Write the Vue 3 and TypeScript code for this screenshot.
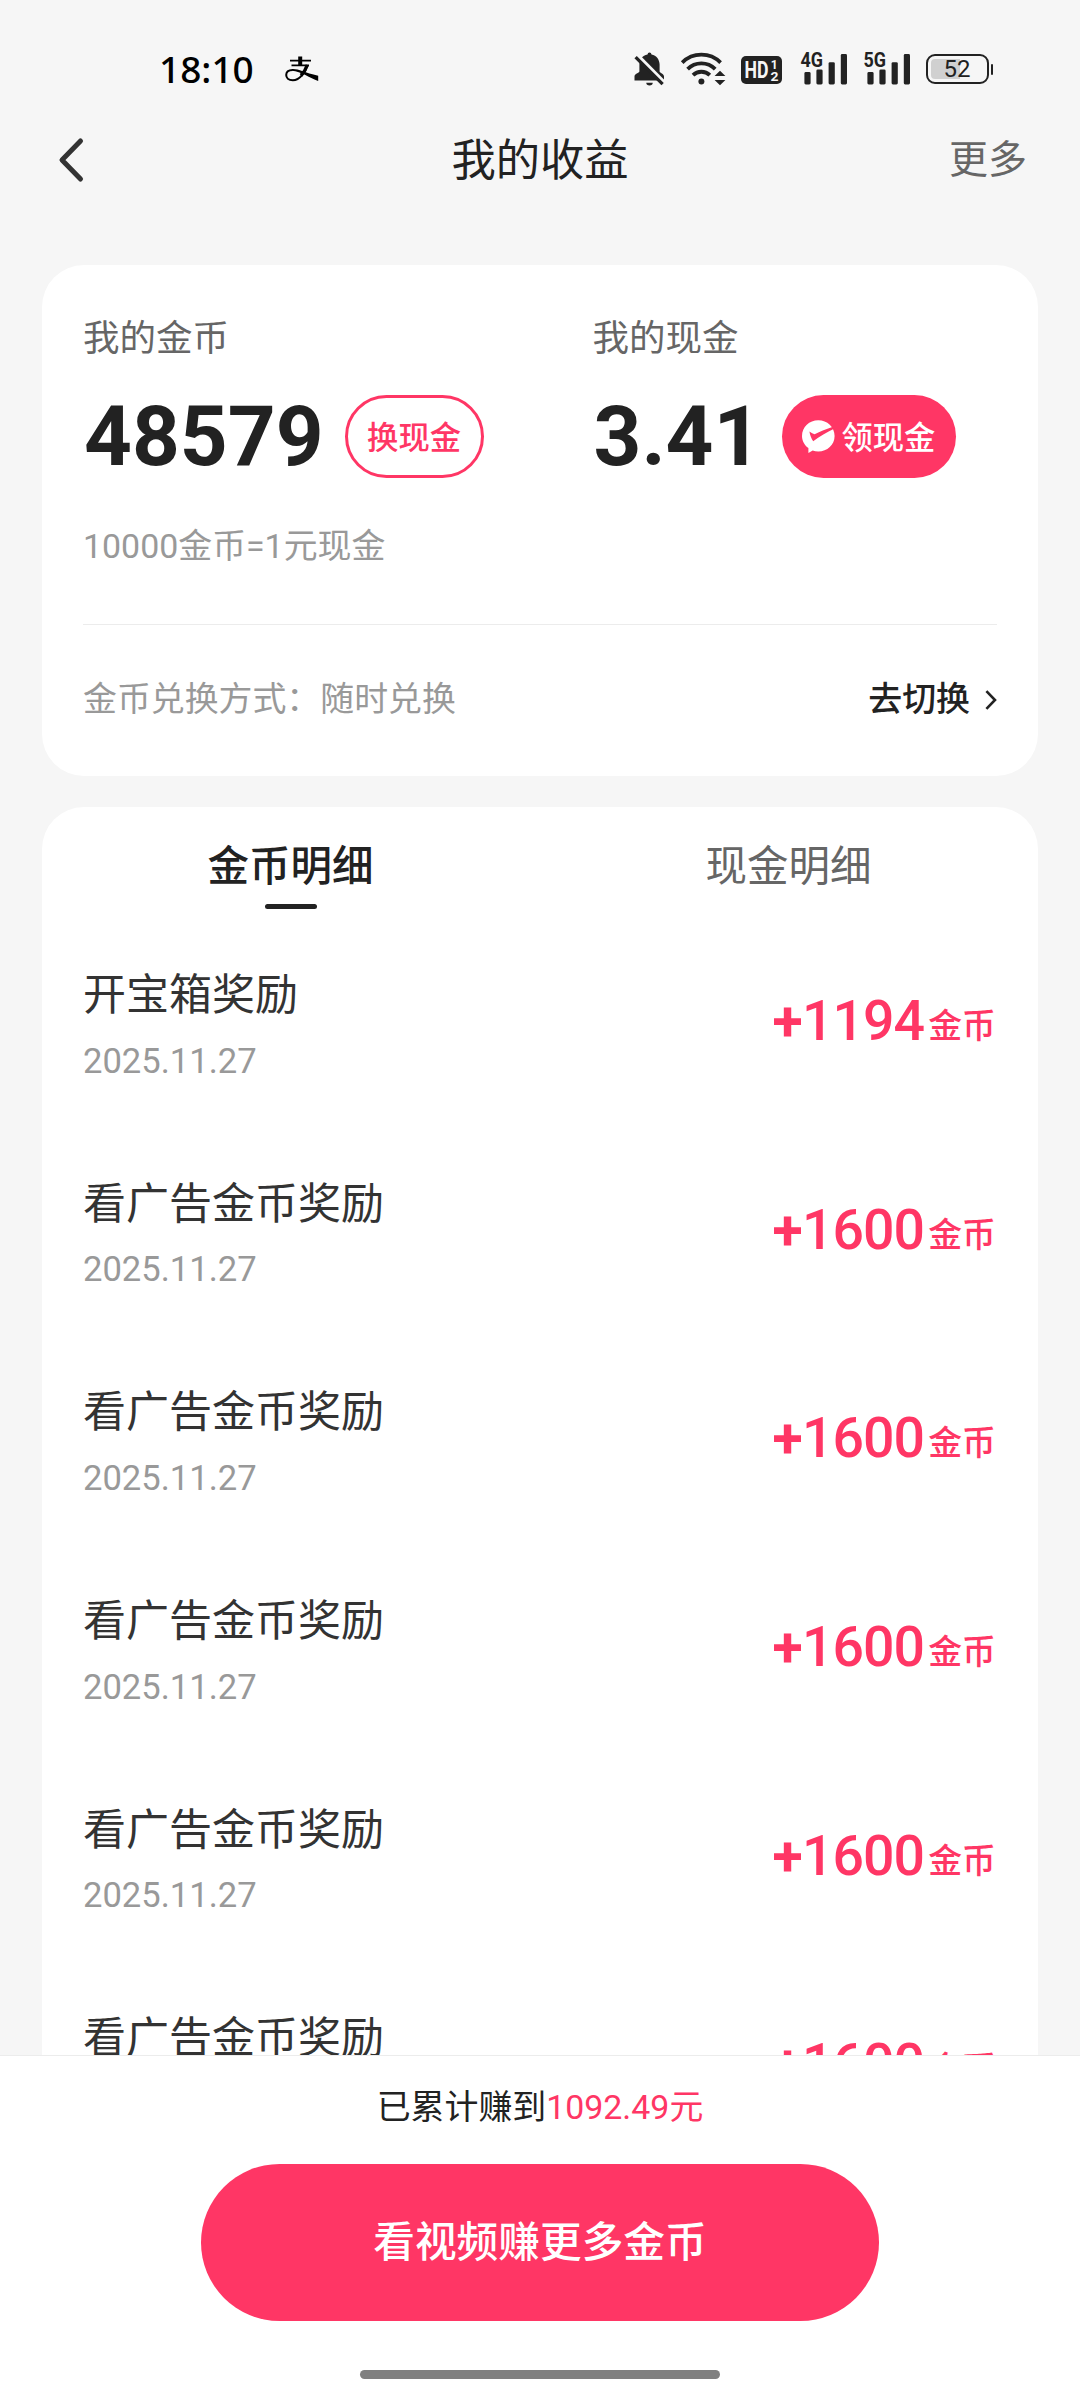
<script setup lang="ts">
interface Entry {
  title: string
  date: string
  amount: string
}

interface Signal {
  label: string
}

const signals: Signal[] = [{ label: '4G' }, { label: '5G' }]

const entries: Entry[] = [
  { title: '开宝箱奖励', date: '2025.11.27', amount: '1194' },
  { title: '看广告金币奖励', date: '2025.11.27', amount: '1600' },
  { title: '看广告金币奖励', date: '2025.11.27', amount: '1600' },
  { title: '看广告金币奖励', date: '2025.11.27', amount: '1600' },
  { title: '看广告金币奖励', date: '2025.11.27', amount: '1600' },
  { title: '看广告金币奖励', date: '2025.11.27', amount: '1600' },
]
</script>

<template>
  <div class="screen">
    <div class="status">
      <span class="clock">18:10</span>
      <svg class="pay" width="34" height="26" viewBox="0 0 34 26" fill="none" stroke="#000">
        <path d="M5 4.6H26M6.5 9.4H24" stroke-width="1.7" />
        <path d="M15.2 0.5V9" stroke-width="4" />
        <path d="M22.6 9C20.5 15.5 15 24.2 7.8 24.2C3.5 24.2 1.2 21.8 1.2 19C1.2 16 3.6 13.9 7.6 13.9" stroke-width="2" />
        <path d="M22.3 9C21 13 18.8 16.5 16 19.5" stroke-width="3.4" />
        <path d="M7 13.1C13 12.6 19 16.5 33.2 19.8V25C25 22.4 16 15.2 7 14.8Z" fill="#000" stroke="none" />
      </svg>
      <div class="status-icons">
        <svg class="bell" width="31" height="34" viewBox="0 0 31 34">
          <path d="M15.5 0.6a2 2 0 0 1 2 1.8C22.6 3.4 25.6 7.6 25.6 12.6V19.5C25.8 21 30 21.5 30 24.6V28.4H0.5V24.6C0.5 21.5 5.2 21 5.4 19.5V12.6C5.4 7.6 8.4 3.4 13.5 2.4A2 2 0 0 1 15.5 0.6Z" fill="#222" />
          <path d="M12.3 30.8H18.7A3.2 2.6 0 0 1 12.3 30.8Z" fill="#222" />
          <path d="M3.6 3.2L31 31" stroke="#f6f6f6" stroke-width="3.4" />
          <path d="M1.6 5.2L28.6 32.2" stroke="#222" stroke-width="3.2" />
        </svg>
        <svg class="wifi" width="45" height="34" viewBox="0 0 45 34" fill="none" stroke="#222" stroke-width="3.8">
          <path d="M1.2 10.6A27.2 27.2 0 0 1 39.6 10.6" />
          <path d="M6.6 17.2A19.4 19.4 0 0 1 34.2 17.2" />
          <path d="M12 23.2A12 12 0 0 1 28.8 23.2" />
          <circle cx="20.4" cy="29.6" r="3" fill="#222" stroke="none" />
          <path d="M33.6 24L39 18.8L44.4 24ZM33.6 28L39 33.2L44.4 28Z" fill="#222" stroke="none" />
        </svg>
        <svg class="hd" width="41" height="28" viewBox="0 0 41 28" fill="#f6f6f6">
          <rect width="41" height="28" rx="5" fill="#222" />
          <text x="3.4" y="22" font-size="23" textLength="24" lengthAdjust="spacingAndGlyphs">HD</text>
          <text x="29.8" y="12.8" font-size="13" textLength="7" lengthAdjust="spacingAndGlyphs">1</text>
          <text x="29.4" y="25.4" font-size="13" textLength="8" lengthAdjust="spacingAndGlyphs">2</text>
        </svg>
        <svg v-for="s in signals" :key="s.label" class="signal" width="48" height="34" viewBox="0 0 48 34" fill="#222">
          <rect x="4.4" y="20" width="6.2" height="12.4" rx="1.4" />
          <rect x="16.4" y="17.4" width="6.2" height="15" rx="1.4" />
          <rect x="28.6" y="10.2" width="6.2" height="22.2" rx="1.4" />
          <rect x="40.8" y="2" width="6.2" height="30.4" rx="1.4" />
          <text x="0.6" y="15.2" font-size="21" textLength="22.5" lengthAdjust="spacingAndGlyphs">{{ s.label }}</text>
        </svg>
        <span class="battery"><span class="cell"><span class="level"></span><span class="pct">52</span></span><span class="nub"></span></span>
      </div>
    </div>

    <header class="nav">
      <svg class="back" width="28" height="46" viewBox="0 0 28 46" fill="none" stroke="#333" stroke-width="5" stroke-linecap="round" stroke-linejoin="round">
        <path d="M23.5 4L5 23L23.5 42" />
      </svg>
      <h1>我的收益</h1>
      <span class="more">更多</span>
    </header>

    <section class="card wallet">
      <div class="balances">
        <div class="balance">
          <div class="label">我的金币</div>
          <div class="value">
            <span class="num">48579</span>
            <span class="pill outline">换现金</span>
          </div>
        </div>
        <div class="balance">
          <div class="label">我的现金</div>
          <div class="value">
            <span class="num">3.41</span>
            <span class="pill solid">
              <svg width="33" height="33" viewBox="0 0 33 33">
                <path d="M16.3 0.3C25.2 0.3 32.6 7 32.6 15.9S25.2 31.4 16.3 31.4C14.3 31.4 12.4 31.1 10.7 30.4L6.4 33V28.1C2.5 25.2 0 20.8 0 15.9C0 7 7.4 0.3 16.3 0.3Z" fill="#fff" />
                <path d="M7.4 11.4C9.4 12.6 11 13.6 12.6 14.3C18 11.6 24.6 8.8 31 6.8L32 8.8C25 12.4 17.5 16.6 11.2 21.2C9.4 18.8 8 15 7.4 11.4Z" fill="#ff3665" />
              </svg>
              领现金
            </span>
          </div>
        </div>
      </div>
      <div class="rate">10000金币=1元现金</div>
      <div class="method">
        <span>金币兑换方式：随时兑换</span>
        <span class="switch">
          去切换
          <svg width="12" height="20" viewBox="0 0 12 20" fill="none" stroke="#222" stroke-width="2.6">
            <path d="M1.4 1.2L10 10L1.4 18.8" />
          </svg>
        </span>
      </div>
    </section>

    <section class="card detail">
      <div class="tabs">
        <div class="tab active">金币明细</div>
        <div class="tab">现金明细</div>
      </div>
      <div v-for="(e, i) in entries" :key="i" class="row">
        <div class="info">
          <div class="title">{{ e.title }}</div>
          <div class="date">{{ e.date }}</div>
        </div>
        <div class="amount"><b>+</b>{{ e.amount }}<small>金币</small></div>
      </div>
    </section>

    <footer class="bottom">
      <div class="total">已累计赚到<span>1092.49元</span></div>
      <div class="cta">看视频赚更多金币</div>
      <div class="home"></div>
    </footer>
  </div>
</template>

<style>
body {
  margin: 0;
}
</style>

<style scoped>
.screen {
  width: 1080px;
  height: 2400px;
  overflow: hidden;
  display: flex;
  flex-direction: column;
  background: #f6f6f6;
  color: #222;
  font-family: Roboto, "Noto Sans CJK SC", sans-serif;
}
.screen * {
  box-sizing: border-box;
}
.status {
  flex: none;
  height: 110px;
  padding: 52px 87px 0 159px;
  display: flex;
  align-items: flex-start;
}
.clock {
  width: 126px;
  margin-top: -1px;
  font: 500 37px/36px "Noto Sans", sans-serif;
  color: #000;
}
.pay {
  margin-top: 4px;
}
.status-icons {
  margin-left: auto;
  display: flex;
  align-items: flex-start;
}
.status-icons svg {
  overflow: visible;
}
.status-icons text {
  font-family: Roboto, sans-serif;
  font-weight: 700;
}
.wifi {
  margin-left: 16px;
}
.hd {
  margin: 4px 0 0 15px;
}
.signal {
  margin-left: 18px;
}
.signal + .signal {
  margin-left: 15px;
}
.battery {
  margin: 2px 0 0 15px;
  display: flex;
  align-items: center;
  gap: 2px;
}
.cell {
  width: 63px;
  height: 30px;
  border: 2.5px solid #222;
  border-radius: 9px;
  padding: 3px;
  display: flex;
}
.level {
  width: 29px;
  border-radius: 4px 0 0 4px;
  background: #d0d0d0;
}
.pct {
  margin-left: -16px;
  font: 400 24px/21px Roboto, sans-serif;
}
.nub {
  width: 2.5px;
  height: 11px;
  background: #222;
  border-radius: 1px;
}
.nav {
  flex: none;
  height: 100px;
  padding: 2px 53px 0 57px;
  display: grid;
  grid-template-columns: 1fr auto 1fr;
  align-items: center;
}
.nav h1 {
  margin: 0 4px 0 0;
  font-size: 44.3px;
  line-height: 60px;
  font-weight: 400;
}
.back {
  margin-top: -2px;
}
.more {
  justify-self: end;
  margin-top: -2px;
  font-size: 39px;
  line-height: 60px;
  color: #666;
}
.card {
  flex: none;
  margin: 0 42px;
  background: #fff;
  border-radius: 42px;
}
.wallet {
  margin-top: 55px;
  height: 511px;
  padding: 48px 41px 0 41px;
}
.balances {
  display: grid;
  grid-template-columns: 509.5px 1fr;
}
.label {
  font-size: 36.5px;
  line-height: 52px;
  color: #666;
}
.value {
  margin-top: 30px;
  height: 83px;
  display: flex;
  align-items: center;
}
.num {
  margin-left: 1px;
  font-size: 83.5px;
  line-height: 83px;
  font-weight: 700;
}
.pill {
  height: 83px;
  padding-bottom: 2px;
  border-radius: 42px;
  display: flex;
  align-items: center;
  font-size: 31.3px;
  font-weight: 500;
  white-space: nowrap;
}
.outline {
  width: 139px;
  justify-content: center;
  margin-left: 21px;
  border: 3px solid #ff3665;
  color: #ff3665;
}
.solid {
  width: 174px;
  margin-left: 21px;
  padding-left: 20px;
  gap: 6px;
  background: #ff3665;
  color: #fff;
}
.solid svg {
  margin-top: 2px;
}
.rate {
  margin-top: 43px;
  font-size: 33.9px;
  line-height: 52px;
  color: #999;
}
.method {
  margin-top: 51px;
  border-top: 1px solid #ececec;
  height: 149px;
  padding-bottom: 5px;
  display: flex;
  align-items: center;
  justify-content: space-between;
  font-size: 33.9px;
  color: #999;
}
.switch {
  display: flex;
  align-items: center;
  gap: 15px;
  color: #222;
  font-weight: 500;
}
.switch svg {
  margin-top: 7px;
}
.detail {
  margin-top: 31px;
}
.tabs {
  display: flex;
  height: 110px;
}
.tab {
  flex: 1;
  display: flex;
  flex-direction: column;
  align-items: center;
  padding: 30px 1px 0 0;
  font-size: 41.5px;
  line-height: 60px;
  color: #666;
}
.active {
  color: #222;
  font-weight: 500;
}
.active::after {
  content: "";
  width: 52px;
  height: 5px;
  margin-top: 7px;
  border-radius: 3px;
  background: #222;
}
.row {
  height: 208.7px;
  padding: 0 42px 0 41px;
  display: flex;
  justify-content: space-between;
}
.info {
  padding-top: 48px;
}
.title {
  font-size: 43px;
  line-height: 60px;
  color: #333;
}
.date {
  margin-top: 13.5px;
  font-size: 34.6px;
  line-height: 44px;
  color: #999;
}
.amount {
  padding-top: 70px;
  font-size: 55.4px;
  line-height: 70px;
  font-weight: 500;
  letter-spacing: -0.9px;
  color: #ff3665;
}
.amount small {
  position: relative;
  top: -2px;
  margin-left: 4px;
  font-size: 33.9px;
  line-height: 1;
  letter-spacing: 0;
}
.bottom {
  position: absolute;
  left: 0;
  top: 2055px;
  width: 1080px;
  height: 345px;
  border-top: 1px solid #ececec;
  background: #fff;
  display: flex;
  flex-direction: column;
  align-items: center;
}
.total {
  margin-top: 27px;
  font-size: 33.9px;
  line-height: 50px;
}
.total span {
  color: #ff3665;
}
.cta {
  margin-top: 31px;
  width: 678px;
  height: 157px;
  padding-bottom: 8px;
  border-radius: 79px;
  background: #ff3665;
  color: #fff;
  font-size: 41.7px;
  font-weight: 500;
  display: flex;
  align-items: center;
  justify-content: center;
}
.home {
  margin-top: 49px;
  width: 360px;
  height: 9px;
  border-radius: 5px;
  background: #808080;
}
</style>
